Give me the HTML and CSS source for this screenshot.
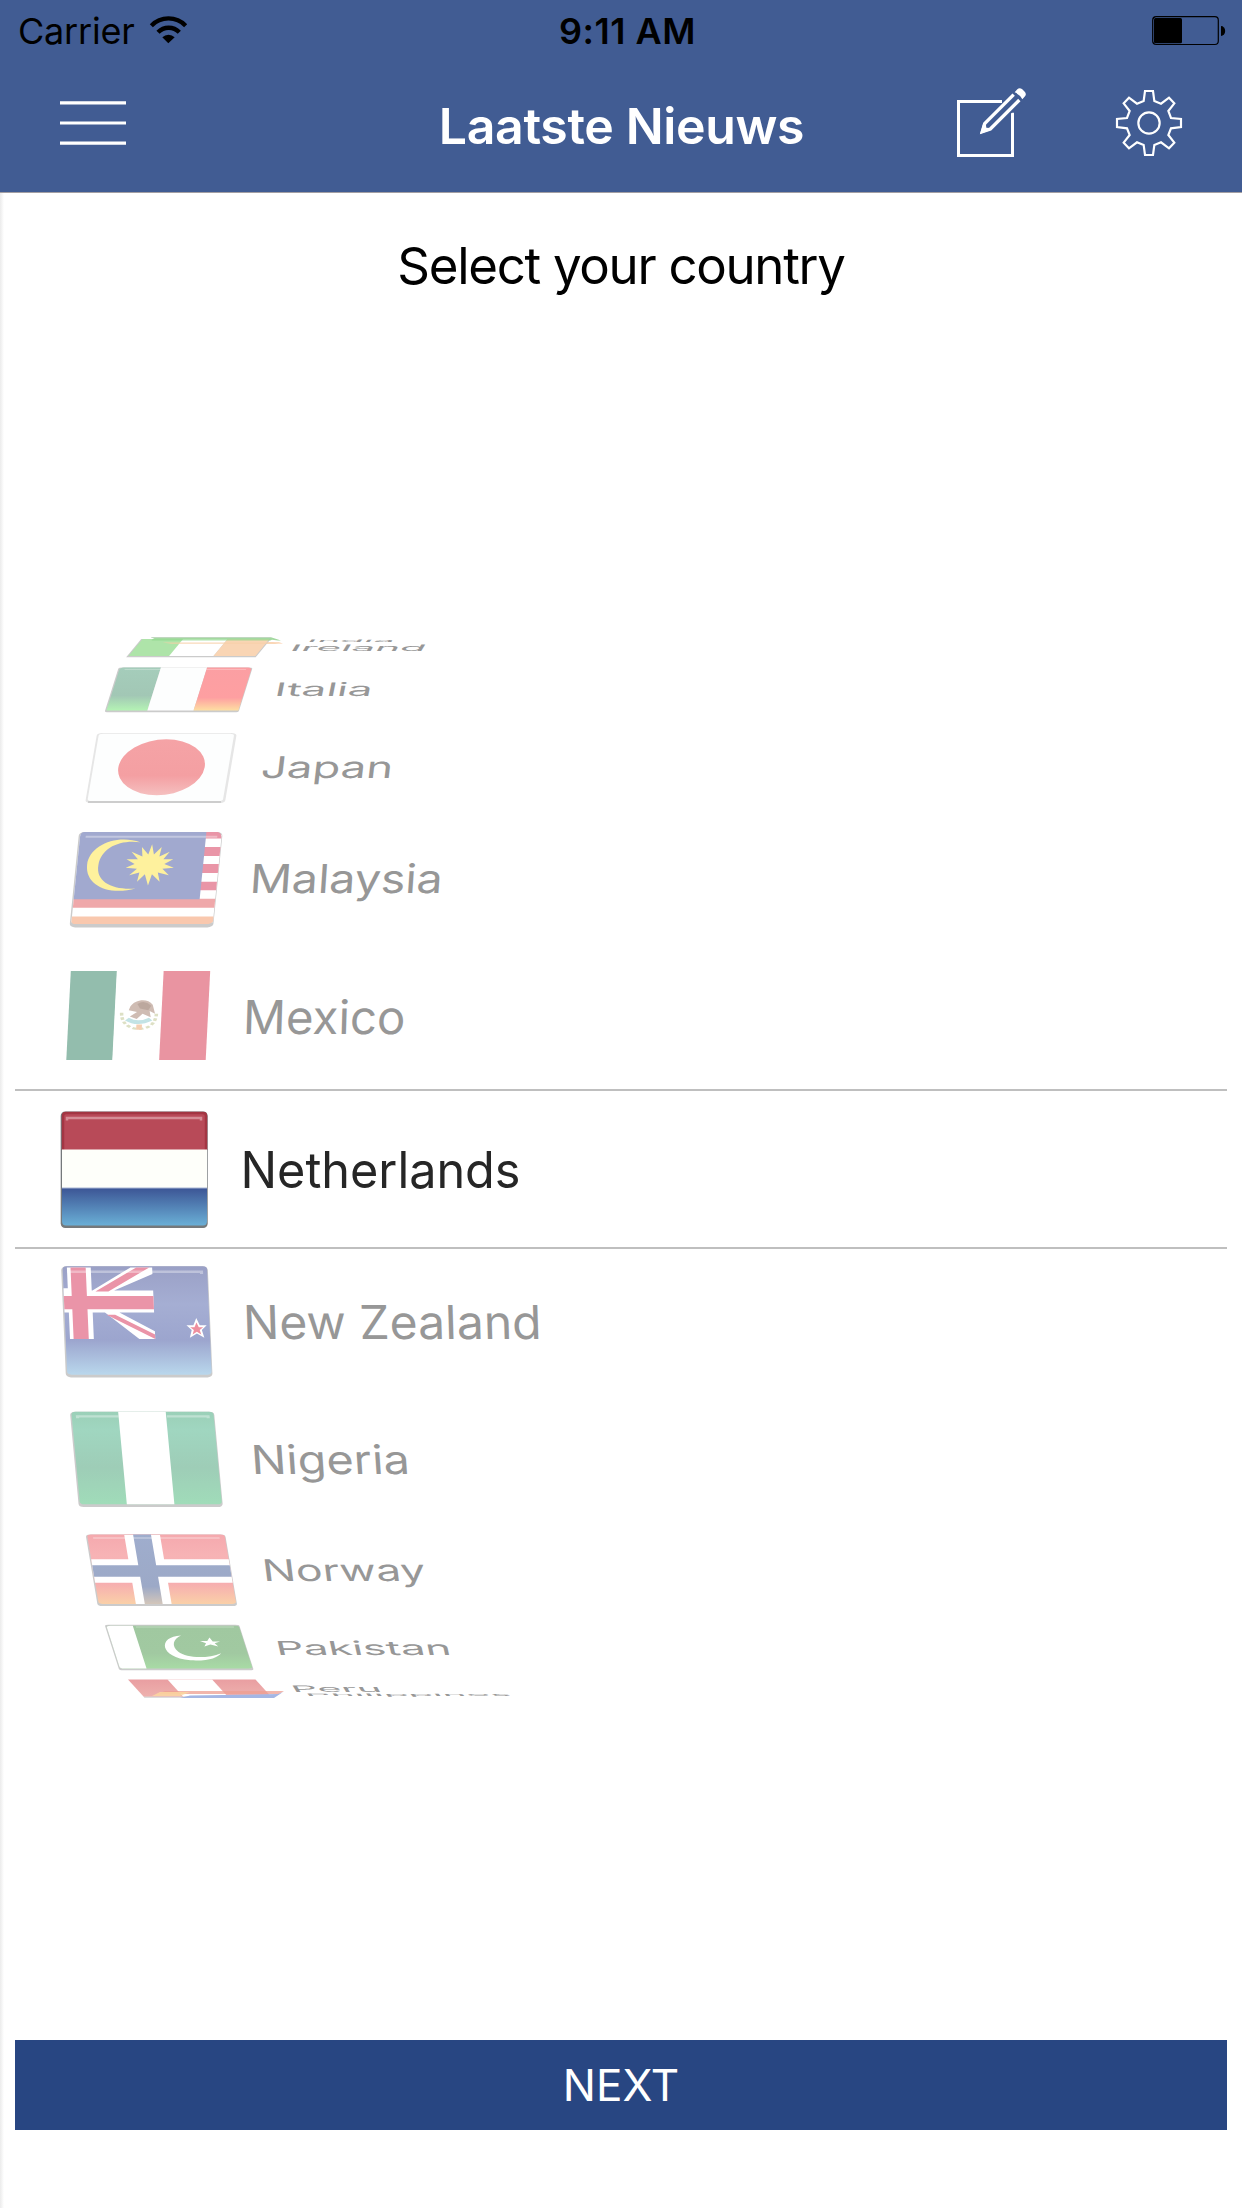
FILE: index.html
```html
<!DOCTYPE html>
<html lang="nl">
<head>
<meta charset="utf-8">
<title>Laatste Nieuws</title>
<link rel="stylesheet" href="styles.css">
</head>
<body>
<svg class="defs" width="0" height="0" aria-hidden="true">
  <defs>
    <linearGradient id="nlBlue" x2="0" y2="1"><stop offset="0" stop-color="#3c5595"/><stop offset="1" stop-color="#6aafd6"/></linearGradient>
    <linearGradient id="nzBlue" x2="0" y2="1"><stop offset="0" stop-color="#9aa0c6"/><stop offset=".35" stop-color="#a5aed3"/><stop offset=".68" stop-color="#9ca5ce"/><stop offset="1" stop-color="#b9d7ec"/></linearGradient>
    <linearGradient id="ngGreen" x2="0" y2="1"><stop offset="0" stop-color="#9bd0b8"/><stop offset=".2" stop-color="#a0d6c0"/><stop offset=".6" stop-color="#9ecdb7"/><stop offset="1" stop-color="#a0dcb9"/></linearGradient>
    <linearGradient id="noRed" x2="0" y2="1"><stop offset="0" stop-color="#f5a9ae"/><stop offset=".3" stop-color="#f7b3b5"/><stop offset=".7" stop-color="#f6adb0"/><stop offset="1" stop-color="#fad0a8"/></linearGradient>
    <linearGradient id="noBlue" x2="0" y2="1"><stop offset="0" stop-color="#9fadcd"/><stop offset=".75" stop-color="#9ca9c7"/><stop offset="1" stop-color="#d3c6ba"/></linearGradient>
    <linearGradient id="pkGreen" x2="0" y2="1"><stop offset="0" stop-color="#a0c8a0"/><stop offset=".65" stop-color="#a1c9a1"/><stop offset="1" stop-color="#a8dba5"/></linearGradient>
    <linearGradient id="itGreen" x2="0" y2="1"><stop offset="0" stop-color="#a5cdbb"/><stop offset=".65" stop-color="#a2c7b5"/><stop offset="1" stop-color="#b4f3b4"/></linearGradient>
    <linearGradient id="itRed" x2="0" y2="1"><stop offset="0" stop-color="#fb9fa3"/><stop offset=".7" stop-color="#fe9fa1"/><stop offset="1" stop-color="#fedfa2"/></linearGradient>
    <linearGradient id="jpRed" x2="0" y2="1"><stop offset="0" stop-color="#f5a3a6"/><stop offset=".65" stop-color="#f49fa2"/><stop offset="1" stop-color="#f5c0c0"/></linearGradient>
    <linearGradient id="peRed" x2="0" y2="1"><stop offset="0" stop-color="#e99ea1"/><stop offset="1" stop-color="#eeb1ae"/></linearGradient>
  </defs>
</svg>

<header class="header">
  <div class="status">
    <div class="carrier">
      <span>Carrier</span>
      <svg class="wifi" viewBox="450 47 111 82">
        <path d="M505 129 487 111A26 26 0 0 1 524 111Z"/>
        <path class="arc" d="M474 96A44 44 0 0 1 538 96"/>
        <path class="arc" d="M454 76A72 72 0 0 1 557 76"/>
      </svg>
    </div>
    <time class="clock">9:11 AM</time>
    <svg class="battery" viewBox="0 0 74 30">
      <rect class="shell" x=".7" y=".7" width="65.6" height="27.8" rx="3.5"/>
      <rect x="2" y="2" width="28" height="25.2" rx="1.5"/>
      <path d="M69 10a4 4.8 0 0 1 0 10Z"/>
    </svg>
  </div>
  <nav class="navbar">
    <svg class="menu" viewBox="0 0 66 44"><path d="M0 1.9H66M0 22H66M0 42.1H66"/></svg>
    <h1 class="title">Laatste Nieuws</h1>
    <div class="actions">
      <svg class="compose" viewBox="168 261 210 210">
        <path class="page" d="M306 304.500H175.500V466.500H337.500V338"/>
        <path class="knock" d="M262 383 352 293"/>
        <path class="body" d="M341 284 254 371 247 395 271 387 358 300"/>
        <path class="solid" d="M240 402 249 373 258 376 259 383 268 384 270 391Z"/>
        <path class="solid" d="M344 277 352 268Q358 262 366 267L375 276Q380 283 375 289L367 298Q359 283 344 277Z"/>
      </svg>
      <svg class="gear" viewBox="648 270 198 198">
        <path d="M735 273H759L763 303 783 311 807 293 823 310 805 333 813 354 843 357V381L813 385 805 405 823 428 807 445 783 427 763 435 759 465H735L731 435 711 427 687 445 671 428 689 405 681 385 651 381V357L681 354 689 333 671 310 687 293 711 311 731 303Z"/>
        <circle cx="747" cy="369" r="32"/>
      </svg>
    </div>
  </nav>
</header>

<main class="content">
  <h2 class="prompt">Select your country</h2>

  <ul class="wheel">
    <li class="row india">
      <svg class="flag" viewBox="50 0 190 2">
        <path fill="#a3d9a0" d="M151 .300H271L281 3.500 278 3.500 268 2.200H155Z"/>
        <path fill="#c9c9c9" opacity=".6" d="M151 0H271V.8H151Z"/>
        <path fill="#fbd2b0" opacity=".8" d="M158 5H279L283 6.800H166Z"/>
      </svg>
      <svg class="label" viewBox="240 0 300 2"><text transform="matrix(1 0 -.06 .07 306 5.2)" textLength="88" lengthAdjust="spacingAndGlyphs">India</text></svg>
    </li>
    <li class="row ireland">
      <svg class="flag" viewBox="50 0 190 18">
        <g transform="matrix(1.27 0 -.145 .175 142.500 0)">
          <path class="edge" d="M-1 0H101V104H-1Z"/>
          <path fill="#aee4a9" d="M0 0H33V97H0Z"/><path fill="#fff" d="M32 0H67V97H32Z"/><path fill="#f9d5b4" d="M67 0H100V97H67Z"/>
          <path fill="#90d78d" opacity=".7" d="M8 0H102V8H8Z"/>
          <path fill="#f8cfa8" opacity=".8" d="M18 20H105L110 27H26Z"/>
        </g>
      </svg>
      <svg class="label" viewBox="240 0 300 18"><text transform="matrix(1 0 -.11 .18 288.500 12.200)" textLength="136" lengthAdjust="spacingAndGlyphs">Ireland</text></svg>
    </li>
    <li class="row italia">
      <svg class="flag" viewBox="50 0 190 45">
        <g transform="matrix(1.32 0 -.14 .445 120 .4)">
          <rect class="edge" x="-1" width="101.500" height="101" rx="3"/>
          <path fill="url(#itGreen)" d="M3 0H31V97H0V6Q0 0 3 0Z"/><path fill="#fdfefe" d="M31 0H66V97H31Z"/><path fill="url(#itRed)" d="M66 0H97Q100 0 100 6V97H66Z"/>
          <path class="gloss" d="M4 5H96"/>
        </g>
      </svg>
      <svg class="label" viewBox="240 0 300 45"><text transform="matrix(1 0 -.075 .374 273.500 29.300)" textLength="98" lengthAdjust="spacingAndGlyphs">Italia</text></svg>
    </li>
    <li class="row japan">
      <svg class="flag" viewBox="50 0 190 70">
        <g transform="matrix(1.37 0 -.12 .7 98.500 0)">
          <rect fill="#e6e6e6" x="-1" width="102" height="100" rx="4"/>
          <path fill="none" stroke="#c4c4c4" stroke-width="2" d="M1 98.500H98"/>
          <rect fill="#fdfefe" x=".4" y="1" width="98.800" height="96.200" rx="3"/>
          <ellipse fill="url(#jpRed)" cx="50.300" cy="49" rx="31.500" ry="40"/>
        </g>
      </svg>
      <svg class="label" viewBox="240 0 300 70"><text transform="matrix(1 0 -.07 .6 260 45)" textLength="132" lengthAdjust="spacingAndGlyphs">Japan</text></svg>
    </li>
    <li class="row malaysia">
      <svg class="flag" viewBox="50 0 190 94">
        <g transform="matrix(1.415 0 -.095 .94 80.500 0)">
          <rect class="edge" x="-1" width="101.500" height="101.500" rx="4"/>
          <path fill="#fff" d="M0 3H100V96H0Z"/>
          <path fill="#e995a7" d="M88 0H97Q100 1 100 7H88ZM88 16H100V25.500H88ZM88 34H100V43.500H88ZM88 53H100V62H88Z"/>
          <path fill="#efa8aa" d="M0 71H100V80.500H0Z"/><path fill="#f9c8ae" d="M0 90H100V95Q99 98 97 98H3Q0 98 0 95Z"/>
          <path fill="#a1a9cf" d="M3 0H89V71.500H0V5Q0 0 3 0Z"/>
          <path fill="#fef19d" d="M43 11C26 2 7 14 7 35 7 57 25 68 43 60 27 62 14 53 15 35 16 17 28 8 43 11Z"/>
          <path fill="#fef19d" d="M51.500 13 53.500 24 58.500 16 57.500 26 64.500 21 60.500 29 67.500 29 61.500 34 68.500 38 60.500 39 65.500 46 57.500 43 59.500 53 53.500 45 51.500 57 48.500 45 43.500 53 44.500 43 37.500 46 42.500 39 34.500 38 40.500 34 34.500 29 42.500 29 37.500 21 45.500 26 44.500 16 49.500 24Z"/>
          <path class="gloss" d="M4 5H97"/>
        </g>
      </svg>
      <svg class="label" viewBox="240 0 300 94"><text transform="matrix(1 0 -.055 .8 249 61)" textLength="193" lengthAdjust="spacingAndGlyphs">Malaysia</text></svg>
    </li>
    <li class="row mexico">
      <svg class="flag" viewBox="50 0 190 89">
        <g transform="matrix(1.394 0 -.045 .89 70.800 0)">
          <path fill="#93bdad" d="M0 0H33.300V100H0Z"/><path fill="#fff" d="M33 0H67V100H33Z"/><path fill="#e994a1" d="M66.600 0H100V100H66.600Z"/>
          <path fill="none" stroke="#dde0c4" stroke-width="2.500" stroke-dasharray="3 2" d="M38 47C38 59 44 65 51 65S63 59 63 47"/>
          <path fill="#cfbcb3" d="M44 40C47 32 56 30 60 38L62 48 58 45 59 52 53 48 49 54 44 51 49 46 43 44Z"/>
          <path fill="#a08a80" opacity=".4" d="M49 37Q54 32 59 39L57 44 51 42Z"/>
          <path fill="none" stroke="#c3e3e5" stroke-width="4" d="M42 54Q50 61 59 54"/>
          <path fill="#f4cfb2" d="M49 60H53V66H49Z"/>
        </g>
      </svg>
      <svg class="label" viewBox="240 0 300 89"><text transform="matrix(1 0 -.028 .935 242.500 62.500)" textLength="162.500" lengthAdjust="spacingAndGlyphs">Mexico</text></svg>
    </li>
    <li class="row selected">
      <svg class="flag" viewBox="50 0 190 117">
        <rect class="edge strong" x="60.700" y=".5" width="147" height="116.500" rx="4.500"/>
        <path fill="#b84a58" d="M62 39V5Q62 1 66 1H203Q207 1 207 5V39Z"/>
        <path fill="none" stroke="#a33643" stroke-width="2.500" d="M63 39V5Q63 2 66 2H203Q206 2 206 5V39"/>
        <path fill="#fefffa" d="M62 38.500H207V77H62Z"/>
        <path fill="url(#nlBlue)" d="M62 77H207V110Q207 114.500 203 114.500H66Q62 114.500 62 110Z"/>
        <path fill="none" stroke="#d58d96" stroke-width="2.500" d="M67 9.500V7H201V9.500"/>
        <path fill="none" stroke="#a9b6d4" d="M62 77H207"/>
      </svg>
      <svg class="label" viewBox="240 0 300 117"><text transform="matrix(1 0 0 1 240.500 76.800)" textLength="280" lengthAdjust="spacingAndGlyphs">Netherlands</text></svg>
    </li>
    <li class="row zealand">
      <svg class="flag" viewBox="50 0 190 110">
        <g transform="matrix(1.445 0 .048 1.100 62.500 .3)">
          <rect class="edge" x="-1" width="101.500" height="101" rx="3.500"/>
          <rect fill="url(#nzBlue)" x="0" y="0" width="100" height="98.500" rx="3"/>
          <path fill="#fff" d="M3 1H19.500V22H62V42H19.500V66H3V42H0V20H3ZM20 22 47 1H62V7L35 22ZM28 42 51 66H62V59L38 42Z"/>
          <path fill="#ea94a8" d="M5.500 1H16V27H62V39H16V66H5.500V39H0V27H5.500ZM22 23 51 1H60L31 23ZM29 44H35L62 62V66Z"/>
          <path fill="#fff" d="M91 47 93.200 53.500H98L94.500 58 96 65 91 61.200 86 65 87.500 58 84 53.500H88.800Z"/>
          <path fill="#ee8f9f" d="M91 51 92.500 55.500H95.500L93 58 94 62 91 59.500 88 62 89 58 86.500 55.500H89.500Z"/>
          <path class="gloss" d="M4 6V5H96V7"/>
        </g>
      </svg>
      <svg class="label" viewBox="240 0 300 110"><text transform="matrix(1 0 .028 .935 243.500 73)" textLength="298.500" lengthAdjust="spacingAndGlyphs">New Zealand</text></svg>
    </li>
    <li class="row nigeria">
      <svg class="flag" viewBox="50 0 190 94">
        <g transform="matrix(1.420 0 .088 .94 71.300 .7)">
          <rect class="edge" x="-1" width="101.500" height="101.500" rx="3.500"/>
          <rect fill="url(#ngGreen)" x="0" y="0" width="100" height="98.500" rx="3"/>
          <path fill="#fff" d="M33 0H66.500V98.500H33Z"/>
          <path class="gloss" d="M4 7V5H33M67 5H96V7"/>
        </g>
      </svg>
      <svg class="label" viewBox="240 0 300 94"><text transform="matrix(1 0 .055 .8 252 63)" textLength="158.500" lengthAdjust="spacingAndGlyphs">Nigeria</text></svg>
    </li>
    <li class="row norway">
      <svg class="flag" viewBox="50 0 190 71">
        <g transform="matrix(1.375 0 .120 .71 87 .4)">
          <rect class="edge" x="-1" width="101.500" height="101" rx="3.500"/>
          <rect fill="url(#noRed)" x="0" y="0" width="100" height="98" rx="3"/>
          <path fill="#fff" d="M27 1H53V35H100V68H53V98H27V68H0V35H27Z"/>
          <path fill="url(#noBlue)" d="M33.500 0H46.500V43.500H100V59.500H46.500V98H33.500V59.500H0V43.500H33.500Z"/>
          <path class="gloss" d="M4 5H96"/>
        </g>
      </svg>
      <svg class="label" viewBox="240 0 300 71"><text transform="matrix(1 0 .075 .6 263.500 47)" textLength="163" lengthAdjust="spacingAndGlyphs">Norway</text></svg>
    </li>
    <li class="row pakistan">
      <svg class="flag" viewBox="50 0 190 45">
        <g transform="matrix(1.325 0 .145 .45 106 .8)">
          <rect class="edge" x="-1" width="101.500" height="101" rx="3"/>
          <rect fill="url(#pkGreen)" x="0" y="2" width="100" height="95" rx="3"/>
          <path fill="#fff" d="M3 2H20V97H3Q0 97 0 93V6Q0 2 3 2Z"/>
          <path fill="#fff" d="M54 24C36 26 32 73 55 79 69 81 76 73 80 63 69 75 53 75 48 60 44 47 47 32 54 24Z"/>
          <path fill="#fff" d="M75 28 76.500 37 82 37 77.500 41 79.500 48 74 44 69 48 71 41 67 36 72.500 36Z"/>
          <path class="gloss" d="M22 5H96"/>
        </g>
      </svg>
      <svg class="label" viewBox="240 0 300 45"><text transform="matrix(1 0 .085 .385 277 30.800)" textLength="175.500" lengthAdjust="spacingAndGlyphs">Pakistan</text></svg>
    </li>
    <li class="row peru">
      <svg class="flag" viewBox="50 0 190 18">
        <g transform="matrix(1.275 0 .162 .18 128 .4)">
          <path fill="url(#peRed)" d="M0 0H100V97H0Z"/><path fill="#fff" d="M31 0H66V97H31Z"/>
          <path fill="#bbb" d="M0 96H100V101H0Z"/>
        </g>
      </svg>
      <svg class="label" viewBox="240 0 300 18"><text transform="matrix(1 0 .11 .18 293 12.500)" textLength="90" lengthAdjust="spacingAndGlyphs">Peru</text></svg>
    </li>
    <li class="row philippines">
      <svg class="flag" viewBox="50 0 190 7">
        <path fill="#ee9d90" opacity=".75" d="M165 0H284L279 3H158Z"/>
        <path fill="#fbd9a0" opacity=".8" d="M160 1H190L180 5H152Z"/>
        <path fill="#a4b6e4" d="M190 4.500 278 3 283 1 274 7H180Z"/>
      </svg>
      <svg class="label" viewBox="240 0 300 7"><text transform="matrix(1 0 .06 .07 306 4.600)" textLength="206" lengthAdjust="spacingAndGlyphs">Philippines</text></svg>
    </li>
  </ul>

  <button class="next" type="button">NEXT</button>
</main>
</body>
</html>
```

FILE: styles.css
```css
* { box-sizing: border-box; }

body {
  margin: 0;
  width: 1242px;
  height: 2208px;
  display: flex;
  flex-direction: column;
  background: #fff;
  color: #000;
  font-family: Inter, "Liberation Sans", sans-serif;
  overflow: hidden;
}

svg { display: block; overflow: visible; flex: none; }
.defs { height: 0; }

.header {
  height: 193px;
  background: #415c93;
  border-bottom: 1px solid #a39fa3;
}

.status {
  height: 62px;
  display: grid;
  grid-template-columns: 1fr auto 1fr;
  padding: 0 16px 0 18px;
}
.carrier { display: flex; gap: 15px; font-size: 36px; line-height: 63px; letter-spacing: -.2px; }
.wifi { width: 37px; height: 27.300px; margin-top: 16px; }
.wifi .arc { fill: none; stroke: #000; stroke-width: 13; }
.clock { font-size: 36px; line-height: 63px; font-weight: 600; letter-spacing: .5px; padding-left: 11px; }
.battery { width: 74px; height: 30px; margin-top: 16px; justify-self: end; }
.battery .shell { fill: none; stroke: #000; stroke-width: 1.200; }

.navbar {
  height: 130px;
  display: grid;
  grid-template-columns: 1fr auto 1fr;
  padding: 0 60px;
}
.menu { width: 66px; height: 44px; margin-top: 39px; }
.menu path { stroke: #fff; stroke-width: 3.200; }
.title { margin: 0; padding-left: 1px; color: #fff; font-size: 50px; line-height: 128px; font-weight: 600; letter-spacing: -.35px; }
.actions { display: flex; justify-content: flex-end; gap: 90px; padding-top: 25px; }
.compose { width: 70px; height: 70px; }
.compose path { fill: none; stroke: #fff; stroke-width: 8; }
.compose .page { stroke-width: 9; }
.compose .knock { stroke: #415c93; stroke-width: 40; }
.compose .body { stroke-width: 10; }
.compose .solid { fill: #fff; stroke: none; }
.gear { width: 66px; height: 66px; margin-top: 3px; }
.gear path, .gear circle { fill: none; stroke: #fff; stroke-width: 6.500; }

.content {
  flex: 1;
  display: flex;
  flex-direction: column;
  padding: 0 15px;
  background: linear-gradient(90deg, #ebebeb, #fff 4px);
}
.prompt { margin: 35px 0 0; text-align: center; font-size: 51px; line-height: 76px; height: 76px; font-weight: 400; letter-spacing: -1.300px; }

.wheel { list-style: none; margin: 333px 0 0; padding: 0; height: 1062px; }
.row { display: grid; grid-template-columns: 190px 300px; padding-left: 35px; }
.row svg { width: 100%; height: 100%; }
.india { height: 2px; }
.ireland { height: 18px; }
.italia { height: 45px; margin-top: 10px; }
.japan { height: 70px; margin-top: 21px; }
.malaysia { height: 94px; margin-top: 29px; }
.mexico { height: 89px; margin-top: 45px; }
.selected {
  height: 160px;
  margin-top: 29px;
  padding-top: 20px;
  border-top: 2px solid #bfbfbf;
  border-bottom: 2px solid #bfbfbf;
}
.selected svg { height: 117px; }
.zealand { height: 110px; margin-top: 17px; }
.nigeria { height: 94px; margin-top: 35px; }
.norway { height: 71px; margin-top: 29px; }
.pakistan { height: 45px; margin-top: 19px; }
.peru { height: 18px; margin-top: 10px; }
.philippines { height: 7px; margin-top: -6px; }

.label text { font-size: 50px; fill: #979797; }
.selected .label text { fill: #262626; }
.edge { fill: #cbcbcb; }
.edge.strong { fill: #75797b; }
.gloss { fill: none; stroke: #fff; stroke-opacity: .35; stroke-width: 2.200; }

.next {
  margin-top: 341px;
  height: 90px;
  padding: 0;
  border: 0;
  background: #284682;
  color: #fff;
  font: 400 44px/90px Inter, "Liberation Sans", sans-serif;
}
```
